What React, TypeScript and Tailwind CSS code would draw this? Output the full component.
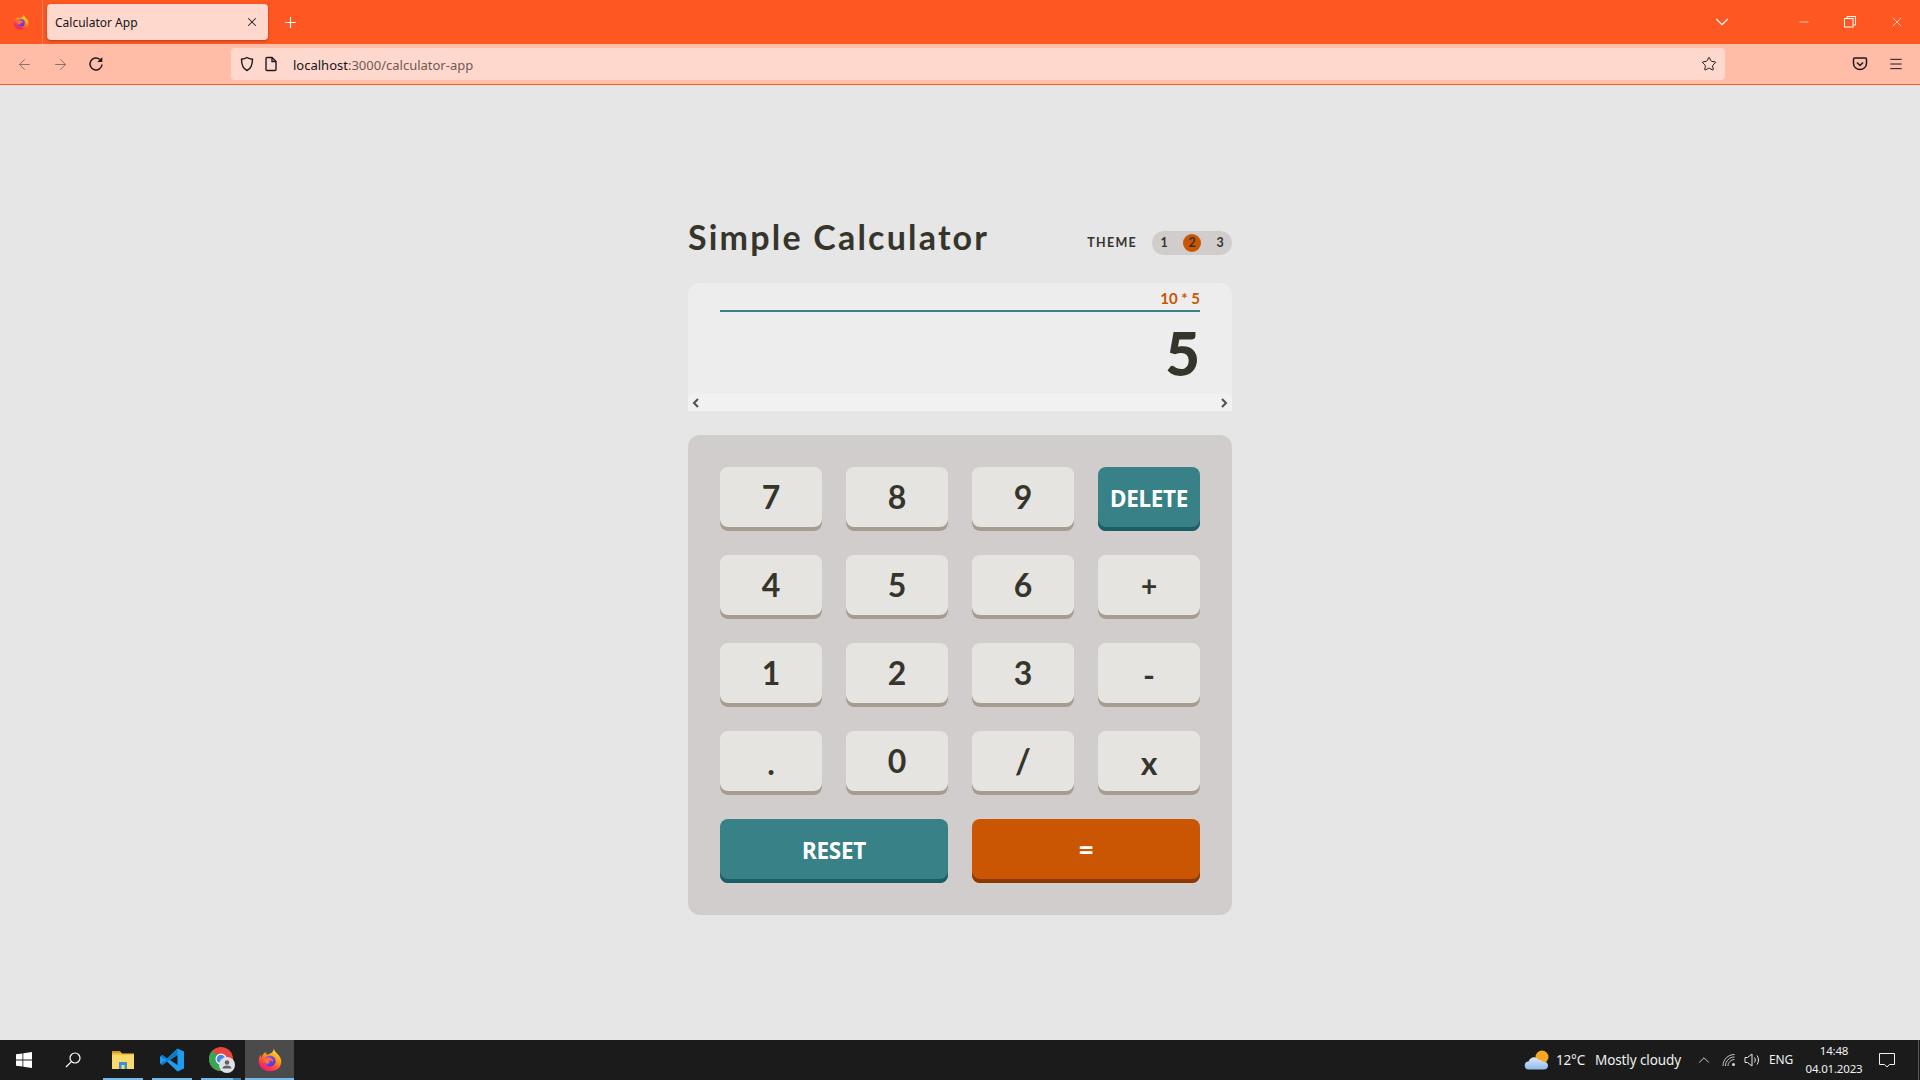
import React from "react";
import { ArrowLeft, ArrowRight, Plus, X, ChevronDown, Minus, Star, Menu, ChevronUp } from "lucide-react";

const Firefox = ({ size }: { size: number }) => (
  <svg width={size} height={size} viewBox="0 0 32 32">
    <defs>
      <linearGradient id="ffa" x1="0.8" y1="0" x2="0.2" y2="1">
        <stop offset="0" stopColor="#ffe847" />
        <stop offset="0.4" stopColor="#ff980e" />
        <stop offset="0.75" stopColor="#ff3750" />
        <stop offset="1" stopColor="#f5156c" />
      </linearGradient>
      <linearGradient id="ffb" x1="0" y1="0" x2="1" y2="1">
        <stop offset="0" stopColor="#9059ff" />
        <stop offset="1" stopColor="#5b2bd0" />
      </linearGradient>
    </defs>
    <path d="M21 1c1 3 3 5 5 7 3 3 5 6 5 10 0 8-6.500 13-15 13S1 25 1 17c0-3 1-6 2.500-8 0 1.500.5 3 1.500 3.500C5.500 8.500 8 6 11 5.500 10.500 7 11 8 12 9c3-1 6-2 7.500-4 .7-1 1.300-2.500 1.500-4z" fill="url(#ffa)" />
    <circle cx="16" cy="17.500" r="7.500" fill="url(#ffb)" />
    <path d="M8 16c2-3 5-4 8-3 3 .8 4.500 3 4 5.500-1.500-1.500-3.500-2-5-1.500 1 1.500 0 3.500-2 4-2 .3-4-1.500-5-5z" fill="#ff7139" />
  </svg>
);

const Key = ({ label, variant = "light", wide, text = "text-[32px]", align = "pb-1" }: { label: string; variant?: "light" | "teal" | "orange"; wide?: boolean; text?: string; align?: string }) => {
  const styles = {
    light: "bg-[#e6e4e1] text-[#35352c] shadow-[inset_0_-4px_0_#a69d91]",
    teal: "bg-[#378187] text-white shadow-[inset_0_-4px_0_#1b5f65]",
    orange: "bg-[#ca5502] text-white shadow-[inset_0_-4px_0_#893901]",
  }[variant];
  return (
    <div className={`${wide ? "col-span-2" : ""} ${styles} ${text} ${align} h-16 rounded-lg flex items-center justify-center font-bold leading-none`}>
      {label}
    </div>
  );
};

const Rows: { label: string; variant?: "light" | "teal" | "orange"; text?: string; align?: string; wide?: boolean }[] = [
  { label: "7" },
  { label: "8" },
  { label: "9" },
  { label: "DELETE", variant: "teal", text: "text-[22.500px] font-['Noto_Sans',sans-serif] tracking-[-0.3px]", align: "pb-0" },
  { label: "4" },
  { label: "5" },
  { label: "6" },
  { label: "+", text: "text-[28px]" },
  { label: "1" },
  { label: "2" },
  { label: "3" },
  { label: "-", text: "text-[32px]", align: "pb-0" },
  { label: ".", text: "text-[32px]", align: "pb-0" },
  { label: "0" },
  { label: "/", text: "text-[34px]" },
  { label: "x", text: "text-[32px]", align: "pb-0" },
  { label: "RESET", variant: "teal", wide: true, text: "text-[22.500px] font-['Noto_Sans',sans-serif] tracking-[-0.3px]", align: "pb-0" },
  { label: "=", variant: "orange", wide: true, text: "text-[28px]", align: "pb-1" },
];

const TabBar = () => (
  <div className="h-11 bg-[#ff5722] flex items-center text-white shrink-0">
    <div className="w-[43px] h-11 flex items-center justify-center border-r border-[#ff7a50]">
      <Firefox size={16} />
    </div>
    <div className="ml-1 w-[221px] h-9 bg-[#ffd8cd] rounded shadow-[0_1px_3px_rgba(0,0,0,0.3)] flex items-center justify-between pl-2 pr-[9px] pt-[2px] text-[12px] text-[#15141a]">
      <span>Calculator App</span>
      <X size={14} strokeWidth={1.8} className="text-[#222] -mt-[2px]" />
    </div>
    <Plus size={17} strokeWidth={1.6} className="ml-[14px]" />
    <div className="flex-1" />
    <ChevronDown size={22} strokeWidth={1.200} className="mr-[64px]" />
    <Minus size={14} strokeWidth={1.200} className="mr-[33px]" />
    <svg width="12" height="12" viewBox="0 0 12 12" fill="none" stroke="white" strokeWidth="1" className="mr-[33px]">
      <rect x="0.500" y="2.500" width="8.500" height="8.500" />
      <path d="M3 2.500V.5h8.500V9H9" />
    </svg>
    <X size={16} strokeWidth={1} className="mr-[15px]" />
  </div>
);

const Toolbar = () => (
  <div className="h-[41px] bg-[#ffbda8] border-b border-[#ff5722] flex items-start pt-1 shrink-0">
    <ArrowLeft size={17} strokeWidth={1.4} className="ml-4 mt-2 text-[#8d7068]" />
    <ArrowRight size={17} strokeWidth={1.4} className="ml-[19px] mt-2 text-[#8d7068]" />
    <svg width="16" height="16" viewBox="0 0 16 16" fill="none" stroke="#1c1b22" strokeWidth="1.500" className="ml-[19px] mt-2">
      <path d="M14 8.500A6 6 0 1 1 11.800 3.300" />
      <path d="M14.300 1v5h-5z" fill="#1c1b22" stroke="none" />
    </svg>
    <div className="ml-[127px] w-[1494px] h-8 bg-[#ffd8cd] rounded flex items-center pl-[8px] pr-2 text-[13px] text-[#15141a]">
      <svg width="16" height="16" viewBox="0 0 16 16" fill="none" stroke="#1c1b22" strokeWidth="1.400">
        <path d="M8 1.500c2 1.200 3.500 1.500 5.500 1.700 0 5.500-1.500 9.500-5.500 11.300C4 12.700 2.500 8.700 2.500 3.200 4.500 3 6 2.700 8 1.500z" />
      </svg>
      <svg width="14" height="16" viewBox="0 0 14 16" fill="none" stroke="#1c1b22" strokeWidth="1.400" className="ml-[9px]">
        <path d="M2 2.500c0-.6.400-1 1-1h5l4 4v8c0 .6-.4 1-1 1H3c-.6 0-1-.4-1-1z" />
        <path d="M8 1.500v4h4" />
      </svg>
      <span className="ml-[15px] pt-1">
        localhost<span className="text-[#6d5a55]">:3000/calculator-app</span>
      </span>
      <div className="flex-1" />
      <Star size={16} strokeWidth={1.5} className="text-[#1c1b22]" />
    </div>
    <svg width="16" height="16" viewBox="0 0 16 16" fill="none" stroke="#1c1b22" strokeWidth="1.500" className="ml-[127px] mt-2">
      <path d="M2.500 2h11c.6 0 1 .4 1 1v4.500c0 3.500-3 6-6.500 6s-6.500-2.500-6.500-6V3c0-.6.400-1 1-1z" />
      <path d="M5 6.500l3 3 3-3" />
    </svg>
    <Menu size={16} strokeWidth={1.500} className="ml-5 mt-2 text-[#1c1b22]" />
  </div>
);

const Taskbar = () => (
  <div className="h-10 bg-[#1b1b1b] flex items-center text-[#f0f0f0] shrink-0 font-['Noto_Sans',sans-serif]">
    <div className="w-12 h-10 flex items-center justify-center">
      <svg width="16" height="16" viewBox="0 0 16 16" fill="white">
        <path d="M0 2.300L6.500 1.400V7.600H0zM7.300 1.300L16 0V7.600H7.300zM0 8.400H6.500V14.600L0 13.700zM7.300 8.400H16V16L7.300 14.700z" />
      </svg>
    </div>
    <div className="w-[50px] h-10 flex items-center justify-center">
      <svg width="16" height="16" viewBox="0 0 16 16" fill="none" stroke="white" strokeWidth="1.200">
        <circle cx="10" cy="6" r="5" />
        <path d="M6.400 9.600L1 15" />
      </svg>
    </div>
    <div className="w-[49px] h-10 flex items-center justify-center relative">
      <svg width="22" height="20" viewBox="0 0 22 20">
        <path d="M0 1.500h8l2 2h12v15H0z" fill="#f4c142" />
        <path d="M0 1h8l1 2H0z" fill="#d99a1e" />
        <path d="M0 5h22v14H0z" fill="#fbd96c" />
        <path d="M7 19v-7h8v7h-2.500v-4h-3v4z" fill="#3a8fd6" />
      </svg>
      <div className="absolute bottom-0 left-[5px] w-10 h-[2px] bg-[#76b9ed]" />
    </div>
    <div className="w-[49px] h-10 flex items-center justify-center relative">
      <svg width="24" height="24" viewBox="0 0 24 24">
        <path d="M17.500 0.500L24 3.500v17l-6.500 3L7 13.500 2.500 17 0 15.500v-7L2.500 7 7 10.500z" fill="#1f9cf0" />
        <path d="M17.500 7L10 12l7.500 5z" fill="#1b1b1b" />
        <path d="M17.500 0.500v6.500L7 13.500 2.500 17 0 15.500 7 12 0 8.500 2.500 7 7 10.500z" fill="#0b7bc4" />
      </svg>
      <div className="absolute bottom-0 left-[5px] w-10 h-[2px] bg-[#76b9ed]" />
    </div>
    <div className="w-[49px] h-10 flex items-center justify-center relative">
      <svg width="26" height="26" viewBox="0 0 26 26" className="ml-[2px]">
        <circle cx="12" cy="12" r="12" fill="#e8453c" />
        <path d="M12 12L1.600 18A12 12 0 0 1 3.500 3.500z" fill="#34a853" />
        <path d="M12 12L18 22.400A12 12 0 0 1 1.600 18z" fill="#34a853" />
        <path d="M12 12H24A12 12 0 0 1 12 24z" fill="#fbc02d" />
        <circle cx="12" cy="12" r="5.500" fill="#fff" />
        <circle cx="12" cy="12" r="4.300" fill="#4285f4" />
        <circle cx="18" cy="18" r="8" fill="#dfe1e5" />
        <circle cx="18" cy="15.500" r="2.300" fill="#5f6368" />
        <path d="M13.500 21.500c0-2 2-3 4.500-3s4.500 1 4.500 3z" fill="#5f6368" />
      </svg>
      <div className="absolute bottom-0 left-[5px] w-10 h-[2px] bg-[#76b9ed]" />
      <div className="absolute bottom-0 left-[37px] w-2 h-[2px] bg-[#3f83b8]" />
    </div>
    <div className="w-[49px] h-10 bg-[#4b4b4b] flex items-center justify-center relative">
      <Firefox size={24} />
      <div className="absolute bottom-0 inset-x-0 h-[2px] bg-[#76b9ed]" />
    </div>
    <div className="flex-1" />
    <svg width="26" height="22" viewBox="0 0 26 22" className="mr-[6px]">
      <defs>
        <linearGradient id="cl" x1="0" y1="0" x2="0" y2="1">
          <stop offset="0" stopColor="#dbe9f9" />
          <stop offset="1" stopColor="#8fb9ea" />
        </linearGradient>
      </defs>
      <circle cx="18" cy="8" r="6.500" fill="#f5a623" />
      <path d="M5 20.500a4 4 0 0 1-.5-8C6 8 12 6.500 14.500 11c1-.6 3-.5 3.500 1.500 4-.5 6.500 2 6 4.500-.3 2.500-2 3.500-4 3.500z" fill="url(#cl)" />
    </svg>
    <span className="text-[13.500px] tracking-[-0.2px]">12°C</span>
    <span className="ml-[10px] text-[13.500px] tracking-[-0.1px]">Mostly cloudy</span>
    <ChevronUp size={18} strokeWidth={1.100} className="ml-[14px]" />
    <svg width="14" height="14" viewBox="0 0 14 14" fill="none" stroke="#d8d8d8" strokeWidth="0.900" className="ml-[9px]">
      <path d="M1 13C1 6.500 6 1.500 12.500 1.500M3.500 13c0-5 4-9 9-9M6 13c0-3.500 3-6.500 6.500-6.500" />
      <circle cx="11.500" cy="11.500" r="1.500" fill="#d8d8d8" stroke="none" />
    </svg>
    <svg width="18" height="16" viewBox="0 0 18 16" fill="none" stroke="#e8e8e8" strokeWidth="1" className="ml-[8px]">
      <path d="M1 5.500h2.500L8 2v12l-4.500-3.500H1zM10.500 5.500c1 1.500 1 3.500 0 5M13 3.500c2 2.500 2 6.500 0 9" />
    </svg>
    <span className="ml-[7px] text-[12px] w-[32px] tracking-[-0.2px]">ENG</span>
    <div className="w-[66px] text-center text-[11.500px] leading-[18px] tracking-[-0.2px]">
      <div>14:48</div>
      <div>04.01.2023</div>
    </div>
    <svg width="18" height="18" viewBox="0 0 18 18" fill="none" stroke="#f0f0f0" strokeWidth="1" className="ml-[11px]">
      <path d="M1.500 2.500h15v11h-5L9 16l-2.500-2.500h-5z" />
    </svg>
    <div className="ml-[22px] w-px h-10 bg-[#5a5a5a]" />
    <div className="w-[1px]" />
  </div>
);

export default function App() {
  return (
    <div className="h-screen w-full flex flex-col overflow-hidden font-['Lato',sans-serif]">
      <div className="font-['Noto_Sans',sans-serif]">
        <TabBar />
        <Toolbar />
      </div>
      <main className="flex-1 bg-[#e6e6e6] flex flex-col items-center pt-[132px]">
        <div className="w-[544px]">
          <div className="h-[66px] flex items-start justify-between">
            <h1 className="text-[34px] leading-[46px] -mt-[3px] font-bold text-[#35352c] tracking-[2.200px]">Simple Calculator</h1>
            <div className="flex items-center mt-[14px]">
              <span className="text-[12.500px] font-bold tracking-[1.300px] text-[#35352c]">THEME</span>
              <div className="ml-[15px] w-20 h-6 rounded-full bg-[#d2cdcd] flex items-center justify-between px-[3px] text-[12.500px] font-bold text-[#35352c]">
                <span className="w-[18px] text-center">1</span>
                <span className="w-[18px] h-[18px] rounded-full bg-[#ca5502] flex items-center justify-center">2</span>
                <span className="w-[18px] text-center">3</span>
              </div>
            </div>
          </div>
          <div className="h-[128px] bg-[#ededed] rounded-t-xl flex flex-col">
            <div className="flex-1 px-8 pt-1">
              <div className="h-[25px] border-b-2 border-[#378187] flex items-center justify-end text-[15px] font-bold text-[#ca5502]">10 * 5</div>
              <div className="text-right text-[60px] font-black leading-none text-[#35352c] mt-[11px]">5</div>
            </div>
            <div className="h-[17px] bg-[#f1f1f1] flex items-center justify-between px-[4px]">
              <svg width="8" height="10" viewBox="0 0 8 10" fill="none" stroke="#505050" strokeWidth="2">
                <path d="M6 1L2 5l4 4" />
              </svg>
              <svg width="8" height="10" viewBox="0 0 8 10" fill="none" stroke="#505050" strokeWidth="2">
                <path d="M2 1l4 4-4 4" />
              </svg>
            </div>
          </div>
          <div className="mt-6 bg-[#d2cdcd] rounded-xl p-8 grid grid-cols-4 gap-6">
            {Rows.map((k, i) => (
              <Key key={i} {...k} />
            ))}
          </div>
        </div>
      </main>
      <Taskbar />
    </div>
  );
}
